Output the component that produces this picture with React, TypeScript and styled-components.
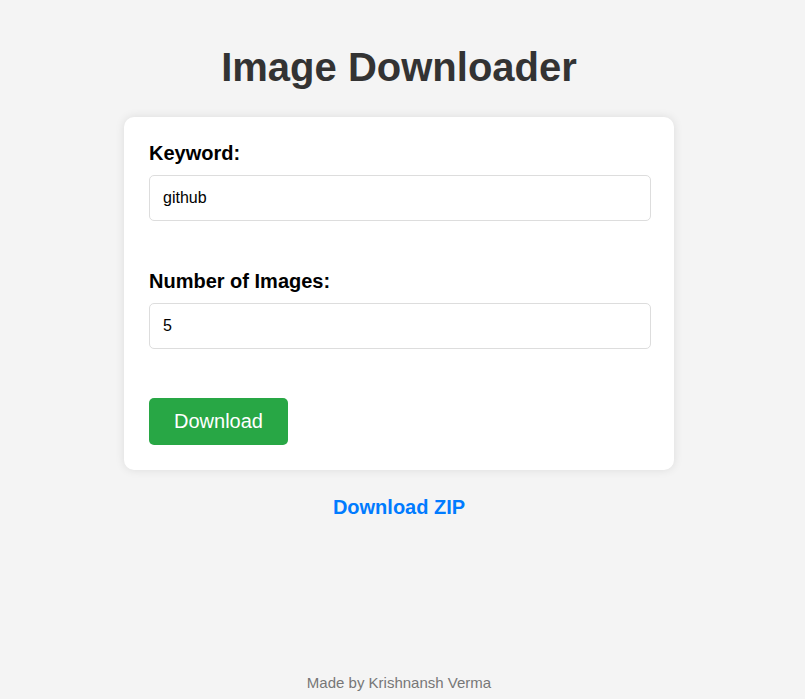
import React from "react";
import styled, { createGlobalStyle } from "styled-components";

const GlobalStyle = createGlobalStyle`
  html, body { margin: 0; padding: 0; }
  body {
    background: #f4f4f4;
    font-family: "Liberation Sans", Arial, sans-serif;
  }
  * { box-sizing: border-box; }
`;

const Page = styled.div`
  min-height: 100vh;
  display: flex;
  flex-direction: column;
  align-items: center;
  padding: 44px 7px 8px 0;
`;

const Title = styled.h1`
  margin: 0 0 27px;
  font-size: 40px;
  line-height: 46px;
  font-weight: bold;
  color: #333;
  text-align: center;
`;

const Card = styled.form`
  width: 550px;
  background: #fff;
  border-radius: 10px;
  box-shadow: 0 0 10px rgba(0, 0, 0, 0.1);
  padding: 25px 23px 25px 25px;
  display: flex;
  flex-direction: column;
`;

const Field = styled.div`
  display: flex;
  flex-direction: column;
  margin-bottom: 49px;
`;

const Label = styled.label`
  font-size: 20px;
  line-height: 23px;
  font-weight: bold;
  color: #000;
  margin-bottom: 10px;
`;

const Input = styled.input`
  height: 46px;
  width: 100%;
  padding: 0 13px;
  border: 1px solid #ddd;
  border-radius: 5px;
  font-family: "Liberation Sans", Arial, sans-serif;
  font-size: 16px;
  color: #000;
  background: #fff;
  outline: none;
`;

const Button = styled.button`
  align-self: flex-start;
  height: 47px;
  padding: 0 25px;
  border: none;
  border-radius: 5px;
  background: #28a745;
  color: #fff;
  font-family: "Liberation Sans", Arial, sans-serif;
  font-size: 20px;
  cursor: pointer;
`;

const ZipLink = styled.a`
  margin-top: 26px;
  font-size: 20px;
  line-height: 23px;
  font-weight: bold;
  color: #007bff;
  text-decoration: none;
`;

const Footer = styled.footer`
  margin-top: auto;
  font-size: 15px;
  line-height: 17px;
  color: #777;
`;

export default function App() {
  return (
    <>
      <GlobalStyle />
      <Page>
        <Title>Image Downloader</Title>
        <Card onSubmit={(e) => e.preventDefault()}>
          <Field>
            <Label htmlFor="kw">Keyword:</Label>
            <Input id="kw" type="text" defaultValue="github" />
          </Field>
          <Field>
            <Label htmlFor="num">Number of Images:</Label>
            <Input id="num" type="number" defaultValue="5" />
          </Field>
          <Button type="submit">Download</Button>
        </Card>
        <ZipLink href="#">Download ZIP</ZipLink>
        <Footer>Made by Krishnansh Verma</Footer>
      </Page>
    </>
  );
}
